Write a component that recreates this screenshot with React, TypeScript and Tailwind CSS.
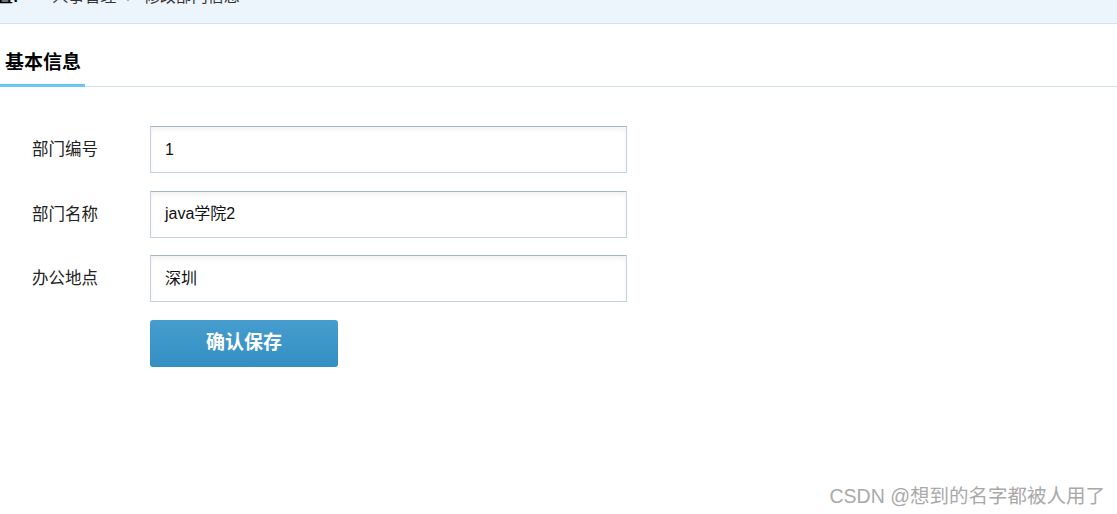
const fontStack = {
  fontFamily: '"Liberation Sans", "Noto Sans CJK SC", sans-serif',
};

const fields = [
  { label: "部门编号", value: "1" },
  { label: "部门名称", value: "java学院2" },
  { label: "办公地点", value: "深圳" },
];

export default function App() {
  return (
    <div
      className="relative h-[514px] w-full overflow-hidden bg-white text-black"
      style={fontStack}
    >
      {/* Breadcrumb bar, scrolled partly out of view */}
      <div className="h-[24px] overflow-hidden border-b border-[#d5e2e8] bg-[#edf5fc]">
        <div className="-mt-[13px] -ml-[19px] flex items-center text-[16px] leading-[20px] text-[#333]">
          <span className="font-bold text-black">位置:</span>
          <span className="ml-[34px]">人事管理</span>
          <span className="ml-[10px] text-[#999]">›</span>
          <span className="ml-[12px]">修改部门信息</span>
        </div>
      </div>

      {/* Tab header */}
      <div className="mt-[26px] flex border-b border-[#d3e0e6]">
        <div className="-mb-px w-[85px] border-b-[3px] border-[#6ac8ef] pb-[8px] pl-[5px] text-[19px] font-bold leading-[26px]">
          基本信息
        </div>
      </div>

      {/* Form */}
      <div className="mt-[39px] flex flex-col gap-[17.67px]">
        {fields.map((f) => (
          <div key={f.label} className="flex items-center">
            <div className="w-[150px] pl-[32px] text-[16.5px] text-[#222]">{f.label}</div>
            <div className="flex h-[47px] w-[477px] items-center border border-[#c6d2db] border-t-[#a7b6c4] px-[14px] text-[16px] text-[#111] shadow-[inset_0_3px_4px_rgba(0,0,0,0.05)]">
              {f.value}
            </div>
          </div>
        ))}
        <div className="flex">
          <div className="w-[150px]" />
          <button className="h-[47px] w-[188px] rounded-[3px] bg-gradient-to-b from-[#469dce] to-[#338fc3] text-[19px] font-bold text-white">
            确认保存
          </button>
        </div>
      </div>

      {/* Watermark */}
      <div className="absolute right-[12px] bottom-[6px] text-[19.5px] leading-[24px] text-[#a9a9a9]">
        CSDN @想到的名字都被人用了
      </div>
    </div>
  );
}
